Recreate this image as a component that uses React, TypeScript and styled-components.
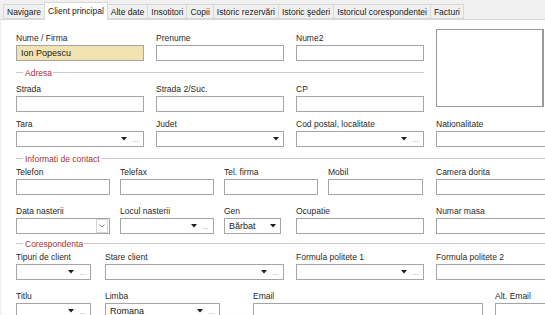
import React from 'react';
import styled, {createGlobalStyle} from 'styled-components';

const GlobalStyle = createGlobalStyle`
html, body {
margin: 0;
padding: 0;
background: #fff;
}
body {
font-family: "Liberation Sans", Arial, sans-serif;
}
`

const Window = styled.div`
width: 545px;
height: 315px;
overflow: hidden;
background: #fff;
font-size: 8.5px;
color: #262626;
box-shadow: inset 2px 0 3px -2px rgba(0, 0, 0, 0.18);
`
const TabBar = styled.div`
display: flex;
align-items: flex-end;
height: 20px;
box-sizing: border-box;
padding-left: 3px;
background: #f0f0f0;
border-bottom: 1px solid #d9d9d9;
`
const Tab = styled.div<{$active?: boolean}>`
display: flex;
align-items: center;
height: ${({$active}) => $active ? 18 : 15}px;
padding: 0 3px ${({$active}) => $active ? 2 : 0}px;
margin-bottom: ${({$active}) => $active ? -1 : 0}px;
box-sizing: border-box;
white-space: nowrap;
font-size: 8.5px;
background: ${({$active}) => $active ? "#fff" : "#f0f0f0"};
border: 1px solid #d9d9d9;
border-bottom: ${({$active}) => $active ? "none" : "1px solid #d9d9d9"};
margin-right: -1px;
color: #222;
`
const Body = styled.div`
padding-left: 16px;
`
const TopSection = styled.div`
display: flex;
gap: 12px;
margin-top: 9px;
`
const LeftColumn = styled.div`
width: 408px;
flex-shrink: 0;
padding-top: 4px;
`
const Photo = styled.div`
width: 108px;
height: 78px;
flex-shrink: 0;
box-sizing: border-box;
border: 1px solid #9a9a9a;
border-right-width: 2px;
`
const Row = styled.div<{$top: number, $gap?: number}>`
display: flex;
gap: ${({$gap}) => $gap ?? 12}px;
margin-top: ${({$top}) => $top}px;
`
const Field = styled.div<{$w: number, $ml?: number}>`
width: ${({$w}) => $w}px;
flex-shrink: 0;
margin-left: ${({$ml}) => $ml ?? 0}px;
`
const Label = styled.div`
height: 11px;
line-height: 11px;
margin-bottom: 1px;
white-space: nowrap;
color: #2a2a2a;
`
const Box = styled.div<{$fill?: string}>`
display: flex;
align-items: center;
height: 16px;
box-sizing: border-box;
border: 1px solid #a5a5a5;
background: ${({$fill}) => $fill ?? "#fff"};
padding: 0 4px 0 4px;
`
const Value = styled.span`
flex: 1;
white-space: nowrap;
font-size: 9px;
color: #1a1a1a;
`
const Dots = styled.span`
width: 7px;
margin-left: 5px;
font-size: 7px;
line-height: 7px;
color: #777;
align-self: flex-end;
margin-bottom: 3px;
`
const DateButton = styled.div`
display: flex;
align-items: center;
justify-content: center;
width: 10px;
height: 12px;
margin-right: -3px;
border: 1px solid #d4d4d4;
`
const Section = styled.div<{$top: number}>`
display: flex;
align-items: center;
height: 11px;
margin-top: ${({$top}) => $top}px;
&::before {
content: "";
width: 7px;
border-top: 1px solid #c8c8c8;
}
&::after {
content: "";
flex: 1;
border-top: 1px solid #c8c8c8;
}
`
const SectionTitle = styled.span`
padding: 0 1px 0 2px;
color: #a83232;
white-space: nowrap;
`

const Arrow = () => (
    <svg width="6" height="4" viewBox="0 0 6 4">
        <polygon points="0,0 6,0 3,3.5" fill="#1e1e1e"/>
    </svg>
);

const Chevron = () => (
    <svg width="6" height="4" viewBox="0 0 6 4">
        <polyline points="0.5,0.5 3,3 5.5,0.5" fill="none" stroke="#8a8a8a" strokeWidth="1"/>
    </svg>
);

interface IFieldProps {
    label: string
    w: number
    ml?: number
    value?: string
    fill?: string
    kind?: "text" | "combo" | "lookup" | "date"
}

const FormField = ({label, w, ml, value, fill, kind = "text"}: IFieldProps) => (
    <Field $w={w} $ml={ml}>
        <Label>{label}</Label>
        <Box $fill={fill}>
            <Value>{value}</Value>
            {(kind === "combo" || kind === "lookup") && <Arrow/>}
            {kind === "lookup" && <Dots>…</Dots>}
            {kind === "date" && <DateButton><Chevron/></DateButton>}
        </Box>
    </Field>
);

const tabs = ["Navigare", "Client principal", "Alte date", "Insotitori", "Copii", "Istoric rezervări", "Istoric şederi", "Istoricul corespondentei", "Facturi"];

const App = () => {
    return (
        <Window>
            <GlobalStyle/>
            <TabBar>
                {tabs.map(t => <Tab key={t} $active={t === "Client principal"}>{t}</Tab>)}
            </TabBar>
            <Body>
                <TopSection>
                    <LeftColumn>
                        <Row $top={0}>
                            <FormField label="Nume / Firma" w={128} value="Ion Popescu" fill="#f3e2b1"/>
                            <FormField label="Prenume" w={128}/>
                            <FormField label="Nume2" w={128}/>
                        </Row>
                        <Section $top={6}><SectionTitle>Adresa</SectionTitle></Section>
                        <Row $top={6}>
                            <FormField label="Strada" w={128}/>
                            <FormField label="Strada 2/Suc." w={128}/>
                            <FormField label="CP" w={128}/>
                        </Row>
                    </LeftColumn>
                    <Photo/>
                </TopSection>
                <Row $top={7}>
                    <FormField label="Tara" w={128} kind="lookup"/>
                    <FormField label="Judet" w={128} kind="combo"/>
                    <FormField label="Cod postal, localitate" w={128} kind="lookup"/>
                    <FormField label="Nationalitate" w={128} kind="combo"/>
                </Row>
                <Section $top={6}><SectionTitle>Informati de contact</SectionTitle></Section>
                <Row $top={3} $gap={10}>
                    <FormField label="Telefon" w={94}/>
                    <FormField label="Telefax" w={94}/>
                    <FormField label="Tel. firma" w={94}/>
                    <FormField label="Mobil" w={95}/>
                    <FormField label="Camera dorita" w={128} ml={3} kind="combo"/>
                </Row>
                <Row $top={11} $gap={10}>
                    <FormField label="Data nasterii" w={94} kind="date"/>
                    <FormField label="Locul nasterii" w={94} kind="lookup"/>
                    <FormField label="Gen" w={57} value="Bărbat" kind="combo"/>
                    <FormField label="Ocupatie" w={128} ml={5}/>
                    <FormField label="Numar masa" w={128} ml={2}/>
                </Row>
                <Section $top={4}><SectionTitle>Corespondenta</SectionTitle></Section>
                <Row $top={3}>
                    <FormField label="Tipuri de client" w={75} kind="lookup"/>
                    <FormField label="Stare client" w={179} ml={2} kind="lookup"/>
                    <FormField label="Formula politete 1" w={128} kind="lookup"/>
                    <FormField label="Formula politete 2" w={128} kind="combo"/>
                </Row>
                <Row $top={11}>
                    <FormField label="Titlu" w={75} kind="lookup"/>
                    <FormField label="Limba" w={115} ml={2} value="Romana" kind="lookup"/>
                    <FormField label="Email" w={230} ml={21}/>
                    <FormField label="Alt. Email" w={128}/>
                </Row>
            </Body>
        </Window>
    );
};

export default App;
